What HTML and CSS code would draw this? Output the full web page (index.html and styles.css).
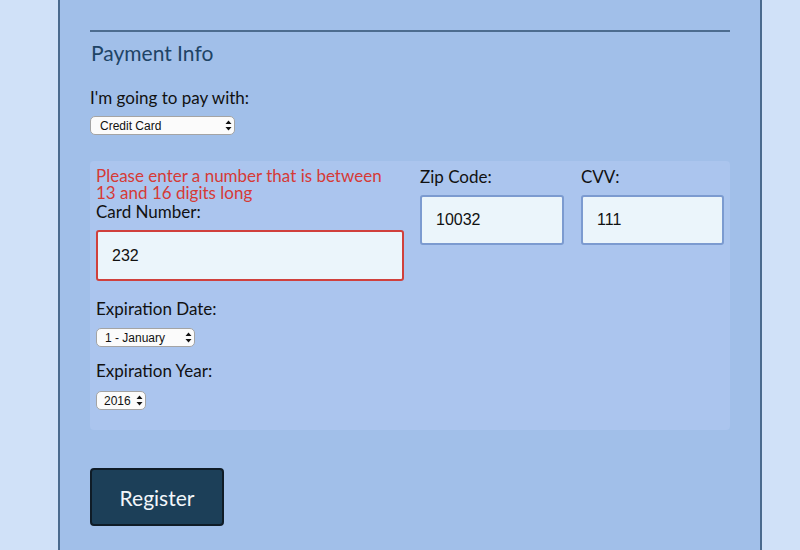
FILE: index.html
```html
<!DOCTYPE html>
<html>
<head>
<meta charset="utf-8">
<link rel="stylesheet" href="styles.css">
</head>
<body>
<div class="page">
  <form class="form">
    <hr class="rule">
    <h2 class="legend">Payment Info</h2>
    <label class="label">I'm going to pay with:</label>
    <div class="sel sel-pay">
      <select class="select"><option>Credit Card</option></select>
      <svg class="arrows" width="7" height="11" viewBox="0 0 7 11"><path d="M3.5 0.5 L6.5 4 L0.5 4 Z M3.5 10.5 L6.5 7 L0.5 7 Z" fill="#111"/></svg>
    </div>
    <div class="card">
      <div class="col col-num">
        <div class="error">Please enter a number that is between 13 and 16 digits long</div>
        <label class="label">Card Number:</label>
        <input class="input input-err" value="232">
        <label class="label label-exp">Expiration Date:</label>
        <div class="sel sel-month">
          <select class="select"><option>1 - January</option></select>
          <svg class="arrows" width="7" height="11" viewBox="0 0 7 11"><path d="M3.5 0.5 L6.5 4 L0.5 4 Z M3.5 10.5 L6.5 7 L0.5 7 Z" fill="#111"/></svg>
        </div>
        <label class="label label-year">Expiration Year:</label>
        <div class="sel sel-year">
          <select class="select"><option>2016</option></select>
          <svg class="arrows" width="7" height="11" viewBox="0 0 7 11"><path d="M3.5 0.5 L6.5 4 L0.5 4 Z M3.5 10.5 L6.5 7 L0.5 7 Z" fill="#111"/></svg>
        </div>
      </div>
      <div class="col">
        <label class="label">Zip Code:</label>
        <input class="input" value="10032">
      </div>
      <div class="col col-cvv">
        <label class="label">CVV:</label>
        <input class="input" value="111">
      </div>
    </div>
    <button type="button" class="btn">Register</button>
  </form>
</div>
</body>
</html>
```

FILE: styles.css
```css
html, body {
  margin: 0;
  padding: 0;
  background: #d0e1f8;
  height: 100%;
  overflow: hidden;
}
.page {
  margin-left: 58px;
  width: 700px;
  min-height: 550px;
  background: #a1bfe9;
  border-left: 2px solid #4a6a8e;
  border-right: 2px solid #4a6a8e;
  font-family: "Lato", "Noto Sans", sans-serif;
}
.form {
  padding: 0 30px 0 30px;
  display: flex;
  flex-direction: column;
  align-items: flex-start;
}
.rule {
  align-self: stretch;
  margin: 30px 0 0 0;
  border: 0;
  height: 2px;
  background: #4d6c8f;
}
.legend {
  margin: 8px 0 0 1px;
  font-size: 21px;
  font-weight: 400;
  color: #1e4466;
  line-height: 26px;
}
.label {
  display: block;
  font-size: 17px;
  line-height: 20px;
  color: #111;
}
.form > .label {
  margin-top: 22px;
}
.sel {
  position: relative;
  display: inline-block;
}
.select {
  appearance: none;
  -webkit-appearance: none;
  background: #fbfbfb;
  border: 1px solid #a4a4a4;
  border-radius: 5px;
  font-family: "Liberation Sans", Arial, sans-serif;
  font-size: 12px;
  color: #111;
  height: 19px;
  padding: 0 0 0 9px;
  display: block;
}
.arrows {
  position: absolute;
  right: 3px;
  top: 4px;
}
.sel-pay {
  margin-top: 8px;
}
.sel-pay .select { width: 145px; }
.sel-month .select { width: 99px; padding-left: 8px; }
.sel-year .select { width: 50px; padding-left: 7px; }
.card {
  align-self: stretch;
  margin-top: 26px;
  background: #abc5ee;
  border-radius: 4px;
  padding: 6px 5px 20px 6px;
  display: grid;
  grid-template-columns: 308px 144px 144px;
  column-gap: 16px;
  align-items: start;
}
.col {
  display: flex;
  flex-direction: column;
  align-items: flex-start;
}
.col-cvv {
  margin-left: 1px;
}
.error {
  color: #d63a36;
  font-size: 17px;
  line-height: 17px;
  width: 300px;
  margin-bottom: 1px;
}
.input {
  box-sizing: border-box;
  width: 100%;
  height: 51px;
  margin-top: 8px;
  background: #ebf5fb;
  border: 2px solid #7c9bd0;
  border-radius: 3px;
  padding: 0 0 0 14px;
  font-family: "Liberation Sans", Arial, sans-serif;
  font-size: 16px;
  color: #111;
  outline: none;
}
.col:not(.col-num) .input {
  height: 50px;
}
.input-err {
  border-color: #d0403c;
}
.label-exp {
  margin-top: 18px;
}
.sel-month {
  margin-top: 9px;
}
.label-year {
  margin-top: 14px;
}
.sel-year {
  margin-top: 10px;
}
.btn {
  margin-top: 38px;
  width: 134px;
  height: 58px;
  background: #1c3f58;
  border: 2px solid #0f1c27;
  border-radius: 4px;
  color: #f2f6fa;
  font-family: "Lato", "Noto Sans", sans-serif;
  font-size: 21px;
  cursor: pointer;
}
```
